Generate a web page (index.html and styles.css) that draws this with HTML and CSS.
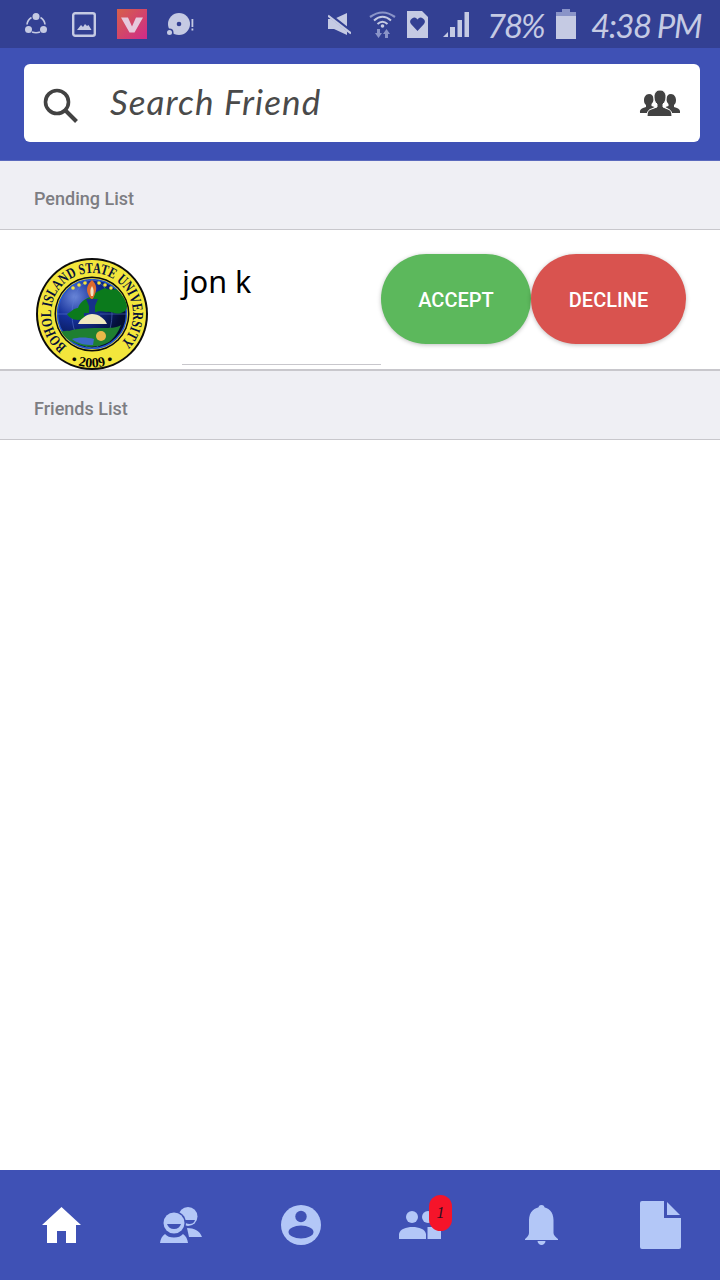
FILE: index.html
```html
<!DOCTYPE html>
<html lang="en">
<head>
<meta charset="utf-8">
<title>Friends</title>
<link rel="stylesheet" href="styles.css">
</head>
<body>
<div class="app">
  <div class="status">
    <div class="status-left">
      <svg class="si si-share" width="22" height="22" viewBox="0 0 22 22"><g fill="#c5cae3"><circle cx="11" cy="3.500" r="3.500"/><circle cx="3.500" cy="16.500" r="3.500"/><circle cx="18.500" cy="16.500" r="3.500"/></g><g fill="none" stroke="#c5cae3" stroke-width="1.600"><path d="M6.500 4.500A9 9 0 0 0 2 11.500"/><path d="M15.500 4.500A9 9 0 0 1 20 11.500"/><path d="M7 19Q11 20.500 15 19"/></g></svg>
      <svg class="si si-pic" width="24" height="25" viewBox="0 0 24 25"><rect x="1.200" y="1.200" width="21.600" height="22.600" rx="2" fill="none" stroke="#c5cae3" stroke-width="2.400"/><path d="M5 18l4-5 2 2 2-3 2 2 1.500-1 3 5z" fill="#c5cae3"/></svg>
      <svg class="si si-v" width="30" height="30" viewBox="0 0 30 30"><defs><linearGradient id="vg" x1="0" y1="0" x2="1" y2="1"><stop offset="0" stop-color="#d6604a"/><stop offset="1" stop-color="#cf2a8a"/></linearGradient></defs><rect width="30" height="30" fill="url(#vg)"/><path d="M4 8.500h7l4 9 4-9h7l-8.500 15h-5z" fill="#e6c9dc"/></svg>
      <svg class="si si-disc" width="27" height="22" viewBox="0 0 27 22"><circle cx="12" cy="11" r="11" fill="#c5cae3"/><circle cx="12" cy="11" r="2.300" fill="#334093"/><circle cx="2.500" cy="19.500" r="4" fill="#334093"/><circle cx="2.500" cy="19.500" r="2.500" fill="#c5cae3"/><rect x="24.500" y="6" width="1.800" height="8" fill="#c5cae3"/><rect x="24.500" y="15.500" width="1.800" height="2" fill="#c5cae3"/></svg>
    </div>
    <div class="status-right">
      <svg class="sr-mute" width="23" height="22" viewBox="0 0 23 22"><path d="M0 6h6L19 0v22L6 16H0z" fill="#c5cae3"/><path d="M0 1l23 18" stroke="#334093" stroke-width="4"/><path d="M0 2.500l23 18" stroke="#c5cae3" stroke-width="2.200"/></svg>
      <svg class="sr-wifi" width="27" height="28" viewBox="0 0 27 28"><path d="M1 7Q13.500-2 26 7" fill="none" stroke="#8a94c8" stroke-width="2.200"/><g fill="none" stroke="#c5cae3" stroke-width="2"><path d="M5 10.500Q13.500 3 22 10.500"/><path d="M8.500 14Q13.500 9.500 18.500 14"/></g><circle cx="13.500" cy="16" r="1.800" fill="#c5cae3"/><path d="M8 19h3v4h2l-3.500 5L6 23h2zM16 28v-4h-2l3.500-5 3.500 5h-2v4z" fill="#8a94c8"/></svg>
      <svg class="sr-sim" width="21" height="27" viewBox="0 0 21 27"><path d="M0 0h15l6 6v21H0z" fill="#c5cae3"/><path d="M10.500 20L4 13a3.800 3.800 0 0 1 6.500-4.500A3.800 3.800 0 0 1 17 13z" fill="#334093"/></svg>
      <svg class="sr-signal" width="26" height="25" viewBox="0 0 26 25"><g fill="#c5cae3"><path d="M0 25l5-5v5z"/><rect x="7" y="15" width="5" height="10"/><rect x="14.500" y="8" width="4.500" height="17"/><rect x="21.500" y="0" width="4.500" height="25"/></g></svg>
      <span class="hand pct">78%</span>
      <svg class="sr-batt" width="20" height="30" viewBox="0 0 20 30"><path d="M6 0h8v3h6v4H0V3h6z" fill="#8a94c8"/><rect y="7" width="20" height="23" fill="#c5cae3"/></svg>
      <span class="hand clock">4:38 PM</span>
    </div>
  </div>

  <header class="top">
    <div class="search">
      <svg class="search-icon" width="36" height="36" viewBox="0 0 36 36"><circle cx="14" cy="14" r="11.500" fill="none" stroke="#424242" stroke-width="3.600"/><path d="M22.500 22.500l11 11" stroke="#424242" stroke-width="4"/></svg>
      <span class="search-text">Search Friend</span>
      <svg class="group-icon" width="42" height="28" viewBox="0 0 42 28"><g fill="#424242"><path d="M10 5c3 0 4.500 2 4.500 5 0 2-.8 4-2 5v2l3 1-4 3v3H1c-.5-3 1-4 3-5l3-1v-2c-1.500-1-2-3-2-5 0-3 2-6 5-6z"/><path d="M32 5c-3 0-4.500 2-4.500 5 0 2 .8 4 2 5v2l-3 1 4 3v3h10.500c.5-3-1-4-3-5l-3-1v-2c1.500-1 2-3 2-5 0-3-2-6-5-6z"/><path d="M21 1c4 0 6 3 6 7 0 3-1 5.500-3 7v3l6 2.500c2 1 3 3 3 7H8c0-4 1-6 3-7l7-2.500v-3c-2-1.500-3-4-3-7 0-4 2-7 6-7z" stroke="#fff" stroke-width="1"/></g></svg>
    </div>
  </header>

  <main class="content">
    <div class="section">Pending List</div>
    <div class="row">
      <svg class="seal" width="114" height="114" viewBox="0 0 114 114">
        <defs>
          <path id="seal-top" d="M31.800 89.300A41 41 0 1 1 82.200 89.300"/>
          <path id="seal-bot" d="M22 97A52.500 52.500 0 0 0 92 97"/>
          <radialGradient id="sky" cx="0.25" cy="0.25" r="0.9"><stop offset="0" stop-color="#6a86d8"/><stop offset="0.35" stop-color="#14309a"/><stop offset="0.8" stop-color="#04103a"/><stop offset="1" stop-color="#020a28"/></radialGradient>
        </defs>
        <circle cx="57" cy="57" r="56" fill="#0b0b0b"/>
        <circle cx="57" cy="57" r="54" fill="#f3e63c"/>
        <circle cx="57" cy="57" r="37.500" fill="#0a0a0a"/>
        <circle cx="57" cy="57" r="36" fill="#f3e63c"/>
        <circle cx="57" cy="57" r="34.500" fill="url(#sky)" stroke="#2255d0" stroke-width="1.500"/>
        <g fill="none" stroke="#5b7ad0" stroke-width=".8" opacity=".7"><path d="M22 57h70"/><path d="M57 23a20 34 0 0 0 0 68"/><path d="M57 23a20 34 0 0 1 0 68"/></g>
        <text class="seal-text" textLength="198" lengthAdjust="spacingAndGlyphs"><textPath href="#seal-top">BOHOL ISLAND STATE UNIVERSITY</textPath></text>
        <text class="seal-text seal-year"><textPath href="#seal-bot" startOffset="50%" text-anchor="middle">• 2009 •</textPath></text>
        <path d="M32 57c4-2 7-6 11-6 2-6 7-9 12-11 4-4 10-7 15-9 3 2 8 2 11 1 5 4 10 10 11 17 0 4-3 6-6 7-6 2-10-2-14-1-6-1-10-1-13 1-5 1-9 3-12 6-4 2-11 1-15-5z" fill="#0b7a1c"/>
        <path d="M51 42h12l-3 7v7h5v3H49v-3h5v-7z" fill="#16308a"/>
        <path d="M57 23c5 5 5 9 3 14-1 3-2 5-3 5s-3-2-4-5c-2-5-1-9 4-14z" fill="#dd6a2e"/>
        <path d="M57 29c2 3 2 6 1 10h-2c-1-4-1-7 1-10z" fill="#f3e4c6"/>
        <path d="M43 67c2-5 9-10 14-10 7 0 13 5 15 10z" fill="#efe9c0"/>
        <path d="M26 74c3 1 5-1 8 0 8-3 23-3 34-3 6 0 14 0 18-3-3 8-7 13-12 17-10 6-24 6-34 1-7-3-11-6-14-12z" fill="#1f7f30"/>
        <path d="M37 82c6-2 15-2 22 0l-1 6c-8 0-15-1-21-6z" fill="#3d68c9"/>
        <circle cx="66" cy="79" r="5" fill="#e9b84a"/>
        <g fill="#f3e63c"><circle cx="38" cy="31" r="1.800"/><circle cx="44" cy="28" r="1.800"/><circle cx="50" cy="26" r="1.800"/><circle cx="64" cy="26" r="1.800"/><circle cx="70" cy="28" r="1.800"/><circle cx="76" cy="31" r="1.800"/></g>
      </svg>
      <div class="who">
        <span class="name">jon k</span>
      </div>
      <div class="actions">
        <button class="btn accept" type="button">ACCEPT</button>
        <button class="btn decline" type="button">DECLINE</button>
      </div>
    </div>
    <div class="section section-b">Friends List</div>
  </main>

  <nav class="tabs">
    <div class="tab"><svg width="39" height="36" viewBox="0 0 39 36"><path d="M19.500 0L39 18h-5v18H24V24h-9v12H5V18H0z" fill="#fff"/></svg></div>
    <div class="tab"><svg width="42" height="36" viewBox="0 0 42 36"><g fill="#b3c7f7"><circle cx="28" cy="9.500" r="9.500"/><path d="M27 21c7 0 13 3 15 9H29z"/></g><path d="M24 13h11c-1 3-3 4-5.500 4-2.500 0-4.500-1-5.500-4z" fill="#3f51b5"/><circle cx="14" cy="16" r="12" fill="#3f51b5"/><circle cx="14" cy="16" r="10.500" fill="#b3c7f7"/><path d="M5 27c-3 2-4.500 5-5 9h28c-.5-4-2-7-5-9-2 2.500-5 3.500-9 3.500S7 29.500 5 27z" fill="#b3c7f7"/><path d="M7 17h14c-1 3-3.500 5-7 5s-6-2-7-5z" fill="#3f51b5"/></svg></div>
    <div class="tab"><svg width="40" height="40" viewBox="0 0 40 40"><circle cx="20" cy="20" r="20" fill="#b3c7f7"/><circle cx="20" cy="11.500" r="5.700" fill="#3f51b5"/><ellipse cx="20" cy="27" rx="12.500" ry="6.500" fill="#3f51b5"/></svg></div>
    <div class="tab tab-friends">
      <svg width="42" height="28" viewBox="0 0 42 28"><g fill="#b3c7f7"><circle cx="13" cy="6" r="6"/><circle cx="29" cy="6" r="6"/><path d="M0 28v-5c1-5 7-7 13.500-7S26 18 27 23v5z"/><path d="M28.500 28v-12h13.500v12z"/></g></svg>
      <span class="badge">1</span>
    </div>
    <div class="tab"><svg width="33" height="40" viewBox="0 0 33 40"><g fill="#b3c7f7"><circle cx="16.500" cy="3" r="3"/><path d="M16.500 2c7 0 12 5 12 13v13c0 2 2 4 4.500 6v1H0v-1c2.500-2 4-4 4-6V15C4 7 9.500 2 16.500 2z"/><path d="M12.500 36h8c0 2-2 4-4 4s-4-2-4-4z"/></g></svg></div>
    <div class="tab tab-file"><svg width="41" height="48" viewBox="0 0 41 48"><path d="M2 0h22v17h17v29a2 2 0 0 1-2 2H2a2 2 0 0 1-2-2V2a2 2 0 0 1 2-2z" fill="#b3c7f7"/><path d="M27 1l13 13H27z" fill="#b3c7f7"/></svg></div>
  </nav>
</div>
</body>
</html>
```
FILE: styles.css
```css
* { box-sizing: border-box; }
html, body { margin: 0; padding: 0; background: #fff; }
.app { width: 720px; height: 1280px; display: flex; flex-direction: column; overflow: hidden; font-family: Roboto, "Liberation Sans", sans-serif; }

.status { height: 48px; flex: none; background: #334093; display: flex; align-items: center; justify-content: space-between; padding: 0 17px 0 25px; color: #c5cae3; }
.status-left { display: flex; align-items: center; }
.si-share { margin-right: 25px; }
.si-pic { margin-right: 21px; }
.si-v { margin-right: 20px; }
.status-right { display: flex; align-items: center; }
.sr-mute { margin-right: 18px; }
.sr-wifi { margin-right: 11px; }
.sr-sim { margin-right: 15px; }
.sr-signal { margin-right: 18px; }
.hand { font-family: Lato, sans-serif; font-style: italic; font-weight: 400; color: #c5cae3; line-height: 1; white-space: nowrap; padding-top: 2px; }
.pct { width: 62px; margin-right: 7px; font-size: 33px; letter-spacing: -2.200px; }
.sr-batt { margin-right: 15px; }
.clock { width: 112px; font-size: 33px; letter-spacing: -1.500px; }

.top { height: 113px; flex: none; background: #3f51b5; padding: 16px 20px 18px 24px; border-bottom: 1px solid #5a69bd; }
.search { height: 78px; background: #fff; border-radius: 6px; display: flex; align-items: center; padding: 0 19px 0 19px; }
.search-icon { flex: none; margin-top: 6px; }
.search-text { flex: 1; margin: 0 0 4px 31px; font-family: Lato, sans-serif; font-style: italic; font-size: 35px; color: #4a4a4a; letter-spacing: 1.100px; }
.group-icon { flex: none; }

.content { flex: 1; display: flex; flex-direction: column; background: #fff; }
.section { height: 69px; flex: none; background: #efeff4; border-bottom: 1px solid #c8c7cc; display: flex; align-items: center; padding: 6px 0 0 34px; font-size: 18px; font-weight: 500; color: #7d7d82; }
.row { height: 141px; flex: none; display: flex; align-items: flex-start; background: #fff; border-bottom: 2px solid #c8c7cc; padding: 27px 0 0 35px; }
.seal { flex: none; overflow: visible; }
.seal-text { font-family: "Liberation Serif", serif; font-weight: 700; font-size: 15px; fill: #061038; }
.seal-year { font-size: 14px; fill: #050505; }
.who { width: 199px; height: 108px; flex: none; margin-left: 33px; border-bottom: 1px solid #c8c7cc; }
.name { display: block; margin-top: -1px; font-family: "Noto Sans", sans-serif; font-size: 30.500px; line-height: 50px; color: #000; }
.actions { display: flex; margin-top: -3px; }
.btn { border: 0; height: 90px; border-radius: 45px; color: #fff; font-family: Roboto, sans-serif; font-weight: 500; font-size: 20px; padding: 2px 0 0; box-shadow: 0 1px 4px rgba(0,0,0,.25); }
.accept { width: 150px; background: #5cb85c; }
.decline { width: 155px; background: #d9534f; }

.tabs { height: 110px; flex: none; background: #3f51b5; display: grid; grid-template-columns: repeat(6, 120px); align-items: center; justify-items: center; padding-left: 1px; }
.tab { position: relative; display: flex; align-items: center; justify-content: center; }
.tab-friends { margin-left: -2px; }
.tab-file { margin-left: -2px; }
.badge { position: absolute; top: -16px; left: 30px; width: 23px; height: 36px; border-radius: 11.500px; background: #f5142a; color: #2a1020; font-family: "Liberation Serif", serif; font-style: italic; font-size: 16px; line-height: 36px; text-align: center; }
```
